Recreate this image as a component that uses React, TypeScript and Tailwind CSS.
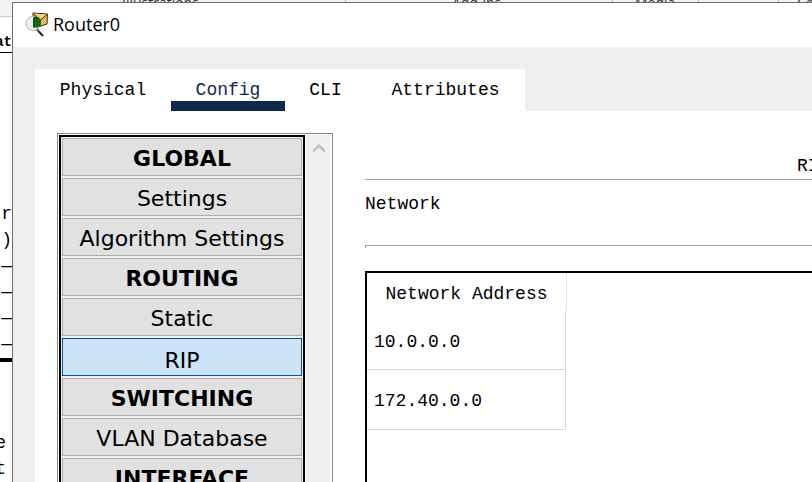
import { clsx } from "clsx";

const tabs = [
  { label: "Physical", width: "w-[136px]" },
  { label: "Config", width: "w-[114px]", active: true },
  { label: "CLI", width: "w-[81px]" },
  { label: "Attributes", width: "w-[159px]" },
];

const menu = [
  { label: "GLOBAL", heading: true },
  { label: "Settings" },
  { label: "Algorithm Settings" },
  { label: "ROUTING", heading: true },
  { label: "Static" },
  { label: "RIP", selected: true },
  { label: "SWITCHING", heading: true },
  { label: "VLAN Database" },
  { label: "INTERFACE", heading: true },
];

const networks = ["10.0.0.0", "172.40.0.0"];

const ribbonGroups = [
  { label: "Illustrations", width: "w-[346px]", pad: "pl-[122px]" },
  { label: "Add-ins", width: "w-[267px]", pad: "pl-[106px]" },
  { label: "Media", width: "w-[86px]", pad: "pl-[22px]" },
  { label: "", width: "w-[80px]", pad: "" },
  { label: "Comments", width: "w-[200px]", pad: "pl-[18px]" },
];

function RouterIcon() {
  return (
    <svg viewBox="0 0 24 25" className="h-[25px] w-6 shrink-0" aria-hidden="true">
      <path d="M8 1 22.500 2 22 12 13 15 8 10Z" fill="#edb95b" stroke="#3c2a10" strokeWidth="1" />
      <path d="M8.500 1.500 15 8.500 22 2.500" fill="#f5cd7c" stroke="#3c2a10" strokeWidth="1" />
      <circle cx="8" cy="11.500" r="7" fill="#eceeec" stroke="#b3b8b5" strokeWidth="1" />
      <path d="M8 6 10 4.500 14 5.500 16 9 15.500 14 13 15.500H8Z" fill="#064b0a" />
      <path d="M8.500 8h6M8.500 11h7M8.500 14h6M10.500 5.500v9.500M13.500 5.500v9.500" stroke="#14901e" strokeWidth="0.800" />
      <path d="M12 17.500 18 24" stroke="#252525" strokeWidth="2.200" />
      <path d="M12 17.500 14 19.500" stroke="#8b8b8b" strokeWidth="1" />
    </svg>
  );
}

function DocumentBehind() {
  return (
    <div className="absolute inset-0 bg-white font-['Liberation_Mono',monospace] text-[18px] leading-[26px]">
      <div className="h-[17px] overflow-hidden border-b border-[#cccccc] bg-[#f3f3f3] font-['Open_Sans',sans-serif] text-sm leading-[14px] text-[#333]">
        <div className="-mt-1 flex">
          {ribbonGroups.map((g, i) => (
            <div key={i} className={clsx("h-5 shrink-0 border-r border-[#b5b5b5]", g.width, g.pad)}>
              {g.label}
            </div>
          ))}
        </div>
      </div>
      <div className="flex w-3 flex-col items-end overflow-hidden">
        <div className="flex h-9 w-full items-end justify-end border-b border-black text-sm leading-5 font-bold">
          at
        </div>
        <div className="mt-[148px]">r</div>
        <div>)</div>
        <div>—</div>
        <div>—</div>
        <div>—</div>
        <div>—</div>
        <div className="mt-px h-1 w-full shrink-0 bg-black" />
        <div className="mt-[68px] mr-[6px]">e</div>
        <div className="mr-[6px]">t</div>
      </div>
    </div>
  );
}

function Sidebar() {
  return (
    <nav className="flex w-[276px] shrink-0 overflow-hidden border border-b-0 border-[#828790] p-px pb-0">
      <div className="flex flex-1 flex-col gap-[2px] border-2 border-b-0 border-black bg-[#f0f0f0] p-px font-['DejaVu_Sans',Verdana,sans-serif] text-[22px]">
        {menu.map((m) => (
          <button
            key={m.label}
            type="button"
            className={clsx(
              "h-[38px] shrink-0 border leading-8 whitespace-nowrap",
              m.heading && "font-bold",
              m.selected ? "border-[#005499] bg-[#cce4f7] pt-[6px]" : "border-[#adadad] bg-[#e1e1e1] pt-1",
            )}
          >
            {m.label}
          </button>
        ))}
      </div>
      <div className="ml-px flex w-[25px] justify-center bg-[#f0f0f0] pt-[9px]">
        <svg viewBox="0 0 12 9" className="h-[9px] w-3" aria-hidden="true">
          <path d="M0 5.500 6 0 12 5.500V9L6 3.500 0 9Z" fill="#bfbfbf" />
        </svg>
      </div>
    </nav>
  );
}

function RipPanel() {
  return (
    <section className="flex min-w-0 flex-1 flex-col">
      <h2 className="flex h-[47px] items-end justify-end border-b border-[#a0a0a0] leading-[26px]">
        <span className="w-[15px] overflow-hidden">RI</span>
      </h2>
      <div className="h-[65px] pt-[11px] leading-[26px]">Network</div>
      <div className="h-[3px] border-t border-l border-[#a0a0a0]" />
      <div className="mt-[23px] flex-1 border-t-2 border-l-2 border-black">
        <table className="w-[200px] border-separate border-spacing-0">
          <thead>
            <tr>
              <th scope="col" className="h-[38px] border-r border-[#e5e5e5] p-0 pt-1 text-center font-normal">
                Network Address
              </th>
            </tr>
          </thead>
          <tbody>
            {networks.map((n, i) => (
              <tr key={n}>
                <td className="p-0 pr-px">
                  <div
                    className={clsx(
                      "flex items-center border-r border-b border-[#d8d8d8] pt-1 pl-[7px]",
                      i === 0 ? "h-[59px]" : "h-[60px]",
                    )}
                  >
                    {n}
                  </div>
                </td>
              </tr>
            ))}
          </tbody>
        </table>
      </div>
    </section>
  );
}

export default function App() {
  return (
    <div className="relative h-screen w-full overflow-hidden text-black">
      <DocumentBehind />
      <main className="absolute top-[2px] right-0 bottom-0 left-3 flex flex-col overflow-hidden border-t border-l border-[#6e6e6e] bg-[#efefef]">
        <header className="flex h-11 shrink-0 items-center gap-1 bg-white pb-[2px] pl-3">
          <RouterIcon />
          <h1 className="font-['Open_Sans','Segoe_UI',sans-serif] text-[18px]">Router0</h1>
        </header>
        <div className="flex min-h-0 flex-1 flex-col pt-[22px] pl-[22px] font-['Liberation_Mono',SimSun,monospace] text-[18px]">
          <div role="tablist" className="flex h-[42px] shrink-0 self-start bg-white">
            {tabs.map((t) => (
              <button
                key={t.label}
                type="button"
                role="tab"
                aria-selected={!!t.active}
                className={clsx(
                  "flex flex-col items-center justify-between pt-[11px] leading-[21px]",
                  t.width,
                  t.active && "text-[#10284c]",
                )}
              >
                {t.label}
                {t.active && <span className="h-[10px] w-full bg-[#10284c]" />}
              </button>
            ))}
          </div>
          <div className="flex min-h-0 flex-1 gap-8 bg-white pt-[22px] pl-[22px]">
            <Sidebar />
            <RipPanel />
          </div>
        </div>
      </main>
    </div>
  );
}
